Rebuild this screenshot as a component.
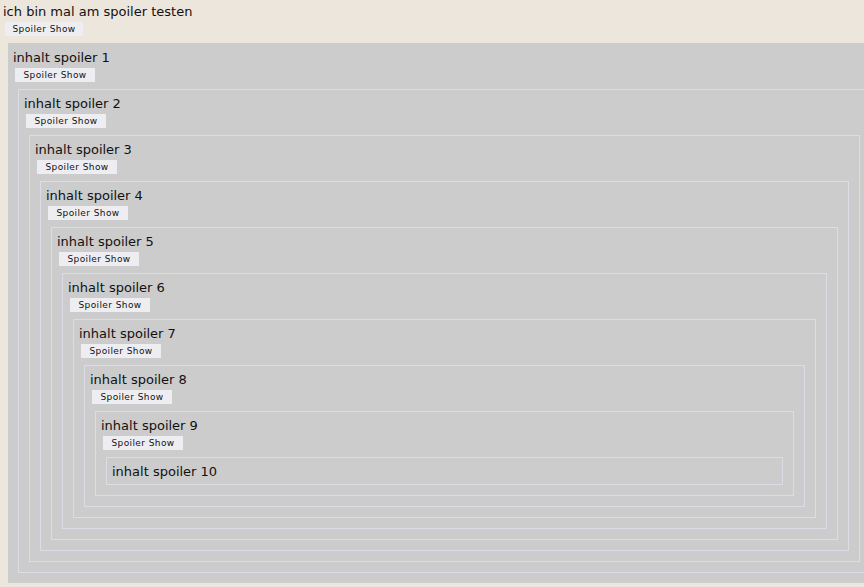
import React from 'react';

const font = { fontFamily: '"DejaVu Sans", Verdana, sans-serif' };

// margin-bottom of the button would collapse with the box below, so the gap sits on the box (mt-[7px])
const SpoilerButton = ({ wide = true }) => (
  <button
    type="button"
    className={`block mt-[3px] ml-[2px] h-[14px] ${wide ? 'w-[80px]' : 'w-[78px]'} bg-[#eeeef2] text-[9px] leading-[14px] text-[#111] tracking-[0.4px] text-center`}
  >
    Spoiler Show
  </button>
);

// one nested box, recurses down to 10
const Spoiler = ({ n }) => {
  const outer = n === 1;
  return (
    <div
      className={
        outer
          ? 'ml-[5px] mt-[7px] w-[873px] bg-[#cccccc] pt-[6px] pl-[5px] pr-[5px] pb-[5px]'
          : 'mt-[7px] mx-[5px] mb-[5px] border border-[#dcdce6] p-[5px]'
      }
    >
      <div className="h-[16px] leading-[18px] text-[13px] text-[#111] whitespace-nowrap">inhalt spoiler {n}</div>
      {n < 10 && (
        <>
          <SpoilerButton />
          <Spoiler n={n + 1} />
        </>
      )}
    </div>
  );
};

export default function App() {
  return (
    <div className="w-[864px] h-[587px] overflow-hidden bg-[#ede6dc] p-[3px]" style={font}>
      <div className="h-[16px] leading-[18px] text-[13px] text-[#111] whitespace-nowrap">ich bin mal am spoiler testen</div>
      <SpoilerButton wide={false} />
      <Spoiler n={1} />
    </div>
  );
}
